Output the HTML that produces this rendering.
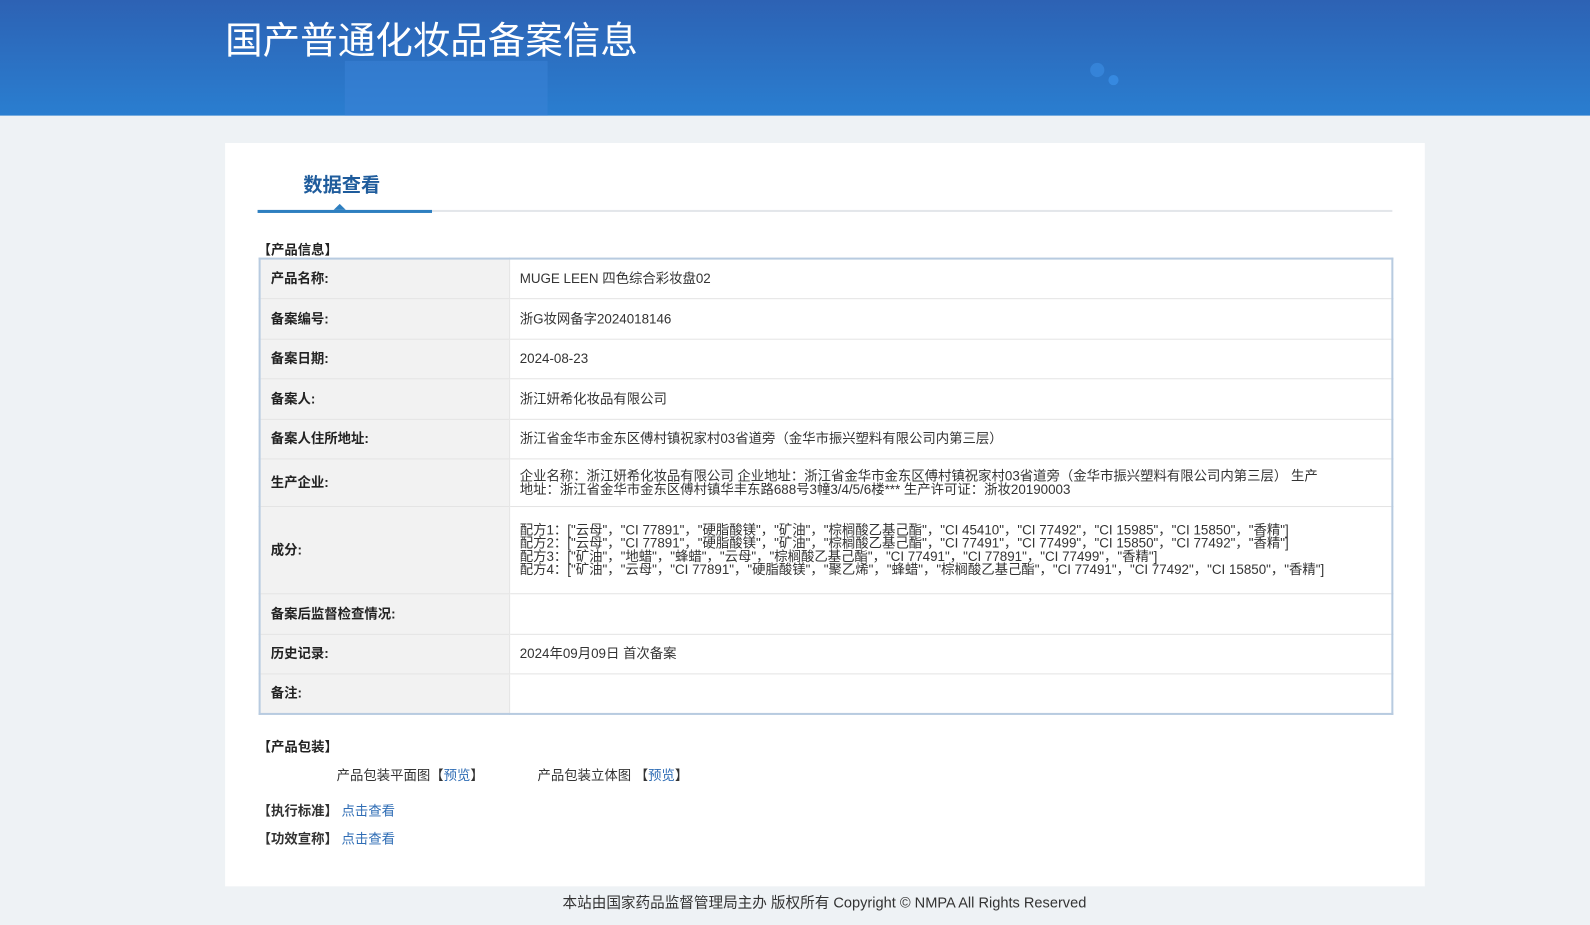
<!DOCTYPE html>
<html><head><meta charset="utf-8"><style>
*{margin:0;padding:0;box-sizing:border-box}
body{width:1590px;height:924px;background:#eef2f5;font-family:"Liberation Sans","Noto Sans CJK SC",sans-serif;color:#333;overflow:hidden;font-size:13px}
.w{position:relative;width:1568px;height:912px;transform:scale(1.0141);transform-origin:0 0}
.hd{position:absolute;left:0;top:0;width:1568px;height:114px;background:linear-gradient(180deg,#2d62b4 0%,#2a7ed0 100%);overflow:hidden}
.hd .s{position:absolute;left:340px;top:60px;width:200px;height:60px;background:#3b84d8;opacity:.5}
.hd .c1{position:absolute;left:1075px;top:62px;width:14px;height:14px;border-radius:50%;background:#3a8ae0;opacity:.7}
.hd .c2{position:absolute;left:1093px;top:74px;width:10px;height:10px;border-radius:50%;background:#3a8ee6;opacity:.8}
.hd h1{position:absolute;left:222px;top:18px;font-size:37px;font-weight:normal;color:#fff;line-height:46px}
.card{position:absolute;left:222px;top:141px;width:1183px;height:733px;background:#fff}
.tab{position:absolute;left:77px;top:27px;font-size:19px;font-weight:bold;color:#1f5c9c}
.ln{position:absolute;left:32px;top:66px;width:1119px;height:2px;background:#e3e6ea}
.ln2{position:absolute;left:32px;top:66px;width:172px;height:3px;background:#2e7fc0}
.tri{position:absolute;left:107px;top:60px;width:0;height:0;border-left:6px solid transparent;border-right:6px solid transparent;border-bottom:6px solid #2e7fc0}
.sec{position:absolute;font-weight:bold;font-size:13.2px;color:#222}
table{position:absolute;left:33px;top:113px;width:1119px;border-collapse:collapse;border:2px solid #b8cbe0}
td{border-top:1px solid #e4e4e4;font-size:13.2px;vertical-align:middle;line-height:13px}
td.l{width:246px;background:#f2f2f2;font-weight:bold;padding-left:10px;color:#222;border-right:1px solid #e4e4e4}
td.v{padding-left:10px;padding-right:60px;color:#333}
a{color:#2f6db5;text-decoration:none}
.ft{position:absolute;top:879px;left:0;width:1626px;text-align:center;font-size:14.4px;color:#333}
.t{position:absolute;font-size:13.2px}
</style></head><body><div class="w">
<div class="hd"><div class="s"></div><div class="c1"></div><div class="c2"></div><h1>国产普通化妆品备案信息</h1></div>
<div class="card">
<div class="tab">数据查看</div>
<div class="ln"></div><div class="ln2"></div><div class="tri"></div>
<div class="sec" style="left:32px;top:95px">【产品信息】</div>
<table>
<tr style="height:39px"><td class="l" style="border-top:none">产品名称:</td><td class="v" style="border-top:none">MUGE LEEN 四色综合彩妆盘02</td></tr>
<tr style="height:40px"><td class="l">备案编号:</td><td class="v">浙G妆网备字2024018146</td></tr>
<tr style="height:39px"><td class="l">备案日期:</td><td class="v">2024-08-23</td></tr>
<tr style="height:40px"><td class="l">备案人:</td><td class="v">浙江妍希化妆品有限公司</td></tr>
<tr style="height:39px"><td class="l">备案人住所地址:</td><td class="v">浙江省金华市金东区傅村镇祝家村03省道旁（金华市振兴塑料有限公司内第三层）</td></tr>
<tr style="height:47px"><td class="l">生产企业:</td><td class="v">企业名称：浙江妍希化妆品有限公司 企业地址：浙江省金华市金东区傅村镇祝家村03省道旁（金华市振兴塑料有限公司内第三层） 生产地址：浙江省金华市金东区傅村镇华丰东路688号3幢3/4/5/6楼*** 生产许可证：浙妆20190003</td></tr>
<tr style="height:86px"><td class="l">成分:</td><td class="v">配方1：["云母"，"CI 77891"，"硬脂酸镁"，"矿油"，"棕榈酸乙基己酯"，"CI 45410"，"CI 77492"，"CI 15985"，"CI 15850"，"香精"]<br>配方2：["云母"，"CI 77891"，"硬脂酸镁"，"矿油"，"棕榈酸乙基己酯"，"CI 77491"，"CI 77499"，"CI 15850"，"CI 77492"，"香精"]<br>配方3：["矿油"，"地蜡"，"蜂蜡"，"云母"，"棕榈酸乙基己酯"，"CI 77491"，"CI 77891"，"CI 77499"，"香精"]<br>配方4：["矿油"，"云母"，"CI 77891"，"硬脂酸镁"，"聚乙烯"，"蜂蜡"，"棕榈酸乙基己酯"，"CI 77491"，"CI 77492"，"CI 15850"，"香精"]</td></tr>
<tr style="height:40px"><td class="l">备案后监督检查情况:</td><td class="v"></td></tr>
<tr style="height:39px"><td class="l">历史记录:</td><td class="v">2024年09月09日 首次备案</td></tr>
<tr style="height:40px"><td class="l">备注:</td><td class="v"></td></tr>
</table>
<div class="sec" style="left:32px;top:585px">【产品包装】</div>
<div class="t" style="left:110px;top:613px">产品包装平面图【<a>预览</a>】</div>
<div class="t" style="left:308px;top:613px">产品包装立体图 【<a>预览</a>】</div>
<div class="t" style="left:32px;top:648px"><b>【执行标准】</b> <a>点击查看</a></div>
<div class="t" style="left:32px;top:676px"><b>【功效宣称】</b> <a>点击查看</a></div>
</div>
<div class="ft">本站由国家药品监督管理局主办 版权所有 Copyright © NMPA All Rights Reserved</div>
</div></body></html>
